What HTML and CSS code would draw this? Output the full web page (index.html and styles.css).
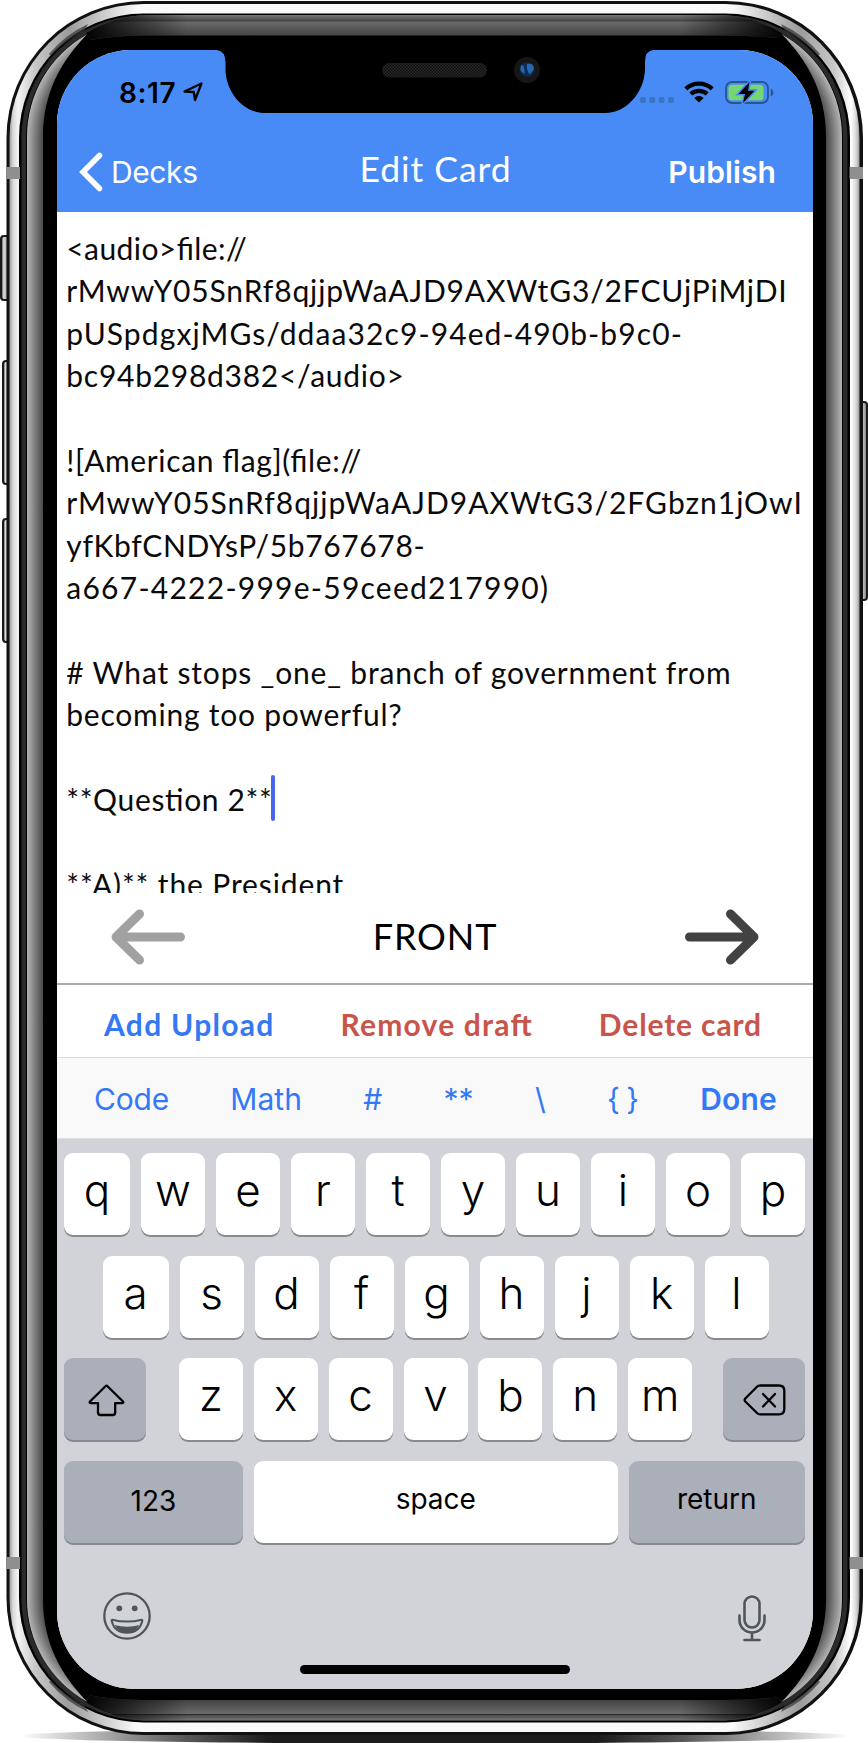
FILE: index.html
```html
<!DOCTYPE html>
<html lang="en">
<head>
<meta charset="utf-8">
<title>Edit Card</title>
<link rel="stylesheet" href="styles.css">
</head>
<body>
<div class="phone">
  <svg class="frame" width="868" height="1743" viewBox="0 0 868 1743" aria-hidden="true">
    <defs>
      <linearGradient id="silver" x1="0" x2="1" y1="0" y2="0">
        <stop offset="0" stop-color="#9a9a9a"/><stop offset=".004" stop-color="#d8d8d8"/><stop offset=".01" stop-color="#f4f4f4"/>
        <stop offset=".03" stop-color="#c8c8c8"/><stop offset=".07" stop-color="#9c9c9c"/><stop offset=".15" stop-color="#fafafa"/>
        <stop offset=".85" stop-color="#fafafa"/><stop offset=".93" stop-color="#9c9c9c"/><stop offset=".97" stop-color="#c8c8c8"/>
        <stop offset=".99" stop-color="#fff"/><stop offset=".996" stop-color="#d8d8d8"/><stop offset="1" stop-color="#9a9a9a"/>
      </linearGradient>
      <linearGradient id="lside" x1="27" x2="43" y1="0" y2="0" gradientUnits="userSpaceOnUse">
        <stop offset="0" stop-color="#b4b4b4"/><stop offset="1" stop-color="#484848"/>
      </linearGradient>
      <radialGradient id="lcorner" cx="144" cy="137" r="117" gradientUnits="userSpaceOnUse">
        <stop offset=".86" stop-color="#484848"/><stop offset="1" stop-color="#b4b4b4"/>
      </radialGradient>
      <linearGradient id="topband" x1="0" x2="0" y1="15" y2="36" gradientUnits="userSpaceOnUse">
        <stop offset="0" stop-color="#777"/><stop offset=".26" stop-color="#4a4a4a"/><stop offset=".28" stop-color="#222"/>
        <stop offset=".32" stop-color="#6b6b6b"/><stop offset="1" stop-color="#424242"/>
      </linearGradient>
      <linearGradient id="fade" x1="82" x2="786" y1="0" y2="0" gradientUnits="userSpaceOnUse">
        <stop offset="0" stop-color="#000"/><stop offset=".15" stop-color="#000" stop-opacity="0"/>
        <stop offset=".85" stop-color="#000" stop-opacity="0"/><stop offset="1" stop-color="#000"/>
      </linearGradient>
      <linearGradient id="shadow" x1="0" x2="1" y1="0" y2="0">
        <stop offset="0" stop-color="#222" stop-opacity="0"/><stop offset=".2" stop-color="#222" stop-opacity=".75"/><stop offset=".3" stop-color="#1c1c1c"/>
        <stop offset=".7" stop-color="#1c1c1c"/><stop offset=".8" stop-color="#222" stop-opacity=".75"/><stop offset="1" stop-color="#222" stop-opacity="0"/>
      </linearGradient>
      <linearGradient id="btn" x1="0" x2="1" y1="0" y2="0">
        <stop offset="0" stop-color="#222"/><stop offset=".3" stop-color="#ddd"/><stop offset="1" stop-color="#777"/>
      </linearGradient>
      <pattern id="mesh" width="3" height="3" patternUnits="userSpaceOnUse">
        <rect width="3" height="3" fill="#0c0c0c"/><rect width="1.5" height="1.5" fill="#2c2c2c"/><rect x="1.5" y="1.5" width="1.5" height="1.5" fill="#2c2c2c"/>
      </pattern>
      <g id="corner">
        <path d="M27 137A117 117 0 0 1 87 34.500C62 60 43 92 43 137Z" fill="url(#lcorner)"/>
        <path d="M49 54Q66 34 88 24L84 32Q66 39 51 56Z" fill="#333" opacity=".7"/>
      </g>
      <g id="edge">
        <path d="M86 33Q110 18 143 15H725Q758 18 782 33L778 38Q756 36 725 35.500H143Q112 36 90 40Z" fill="url(#topband)"/>
        <path d="M86 33Q110 18 143 15H725Q758 18 782 33L778 38Q756 36 725 35.500H143Q112 36 90 40Z" fill="url(#fade)"/>
      </g>
    </defs>
    <ellipse cx="434" cy="1736" rx="416" ry="7.500" fill="url(#shadow)"/>
    <g stroke="#1a1a1a" stroke-width="2" fill="url(#btn)">
      <rect x="1" y="236" width="9" height="64" rx="3"/>
      <rect x="3" y="361" width="8" height="123" rx="3"/>
      <rect x="3" y="519" width="8" height="123" rx="3"/>
      <rect x="859" y="402" width="8" height="198" rx="3"/>
    </g>
    <rect x="6.500" y="1" width="856.500" height="1734" rx="137" fill="#111"/>
    <rect x="9.500" y="4" width="850" height="1728" rx="134" fill="url(#silver)"/>
    <rect x="19" y="13.500" width="831" height="1709" rx="124.500" fill="#000"/>
    <rect x="21.500" y="15.500" width="826" height="1705" rx="122" fill="#2b2b2b"/>
    <rect x="26" y="20" width="817" height="1695" rx="117" fill="#000"/>
    <rect x="27" y="136.500" width="16" height="1463" fill="url(#lside)"/>
    <rect x="27" y="136.500" width="16" height="1463" fill="url(#lside)" transform="matrix(-1 0 0 1 869 0)"/>
    <use href="#corner"/>
    <use href="#corner" transform="matrix(-1 0 0 1 869 0)"/>
    <use href="#corner" transform="matrix(1 0 0 -1 0 1736)"/>
    <use href="#corner" transform="matrix(-1 0 0 -1 869 1736)"/>
    <use href="#edge"/>
    <use href="#edge" transform="matrix(1 0 0 -1 0 1735.500)"/>
    <g fill="#8f8f8f">
      <rect x="7" y="167" width="13" height="12"/><rect x="849.500" y="167" width="13.500" height="12"/>
      <rect x="7" y="1557" width="13" height="12"/><rect x="849.500" y="1557" width="13.500" height="12"/>
    </g>
  </svg>

  <main class="screen">
    <header class="top">
      <div class="status">
        <span class="clock">8:17</span>
        <svg class="loc" width="21" height="20" viewBox="0 0 21 20"><path d="M1.500 9.500L18.500 1.500L12 18L10.800 10Z" fill="none" stroke="#000" stroke-width="2.300" stroke-linejoin="round"/></svg>
        <svg class="signal" width="34" height="6" viewBox="0 0 34 6" fill="#3d73c4"><rect width="6" height="6" rx="2"/><rect x="9.300" width="6" height="6" rx="2"/><rect x="18.600" width="6" height="6" rx="2"/><rect x="28" width="6" height="6" rx="2"/></svg>
        <svg class="wifi" width="30" height="22" viewBox="0 0 30 22"><path d="M1.800 7.800A19.500 19.500 0 0 1 28.200 7.800M6.800 13A12.300 12.300 0 0 1 23.200 13" fill="none" stroke="#000" stroke-width="4.300"/><path d="M15 21.500L10.300 17A6.500 6.500 0 0 1 19.700 17Z"/></svg>
        <svg class="battery" width="49" height="23" viewBox="0 0 49 23"><rect x="1" y="1" width="42" height="21" rx="6" fill="none" stroke="#2c5490" stroke-width="1.800"/><path d="M45.800 7.500Q48.500 9 48.500 11.500T45.800 15.500Z" fill="#2c5490"/><rect x="3.500" y="3.700" width="35" height="15.500" rx="3.500" fill="#76d672"/><path d="M24.500 1L13.500 13H20L18 22L29.500 9.800H23Z" stroke="#488bf6" stroke-width="3"/><path d="M24.500 1L13.500 13H20L18 22L29.500 9.800H23Z" fill="#000"/></svg>
      </div>
      <nav class="nav">
        <span class="back"><svg width="24" height="40" viewBox="0 0 24 40"><path d="M20.500 3.500L4 20L20.500 36.500" fill="none" stroke="#fff" stroke-width="5.500" stroke-linecap="round"/></svg><span class="decks">Decks</span></span>
        <h1 class="title">Edit Card</h1>
        <span class="publish">Publish</span>
      </nav>
    </header>

    <section class="editor">
      <div class="line s1">&lt;audio&gt;file://</div>
      <div class="line s2">rMwwY05SnRf8qjjpWaAJD9AXWtG3/2FCUjPiMjDI</div>
      <div class="line s3">pUSpdgxjMGs/ddaa32c9-94ed-490b-b9c0-</div>
      <div class="line s4">bc94b298d382&lt;/audio&gt;</div>
      <div class="line"></div>
      <div class="line s5">![American flag](file://</div>
      <div class="line s6">rMwwY05SnRf8qjjpWaAJD9AXWtG3/2FGbzn1jOwI</div>
      <div class="line s7">yfKbfCNDYsP/5b767678-</div>
      <div class="line s8">a667-4222-999e-59ceed217990)</div>
      <div class="line"></div>
      <div class="line s9"># What stops _one_ branch of government from</div>
      <div class="line s10">becoming too powerful?</div>
      <div class="line"></div>
      <div class="line s11">**Question 2**<span class="caret"></span></div>
      <div class="line"></div>
      <div class="line s12">**A)** the President</div>
    </section>

    <section class="pager">
      <svg width="75" height="56" viewBox="0 0 75 56"><path d="M28.500 5L5 28L28.500 51M8 28H69.500" fill="none" stroke="#a1a1a1" stroke-width="9" stroke-linecap="round" stroke-linejoin="round"/></svg>
      <span class="side">FRONT</span>
      <svg width="75" height="56" viewBox="0 0 75 56"><path d="M46.500 5L70 28L46.500 51M67 28H5.500" fill="none" stroke="#424242" stroke-width="9" stroke-linecap="round" stroke-linejoin="round"/></svg>
    </section>

    <section class="actions">
      <span class="add">Add Upload</span>
      <span class="danger">Remove draft</span>
      <span class="danger delete">Delete card</span>
    </section>

    <section class="tools">
      <span class="code">Code</span><span class="math">Math</span><span>#</span><span class="stars">**</span><span>\</span><span class="braces">{ }</span><span class="done">Done</span>
    </section>

    <section class="keyboard">
      <div class="row">
        <span class="key first">q</span><span class="key">w</span><span class="key">e</span><span class="key">r</span><span class="key">t</span><span class="key">y</span><span class="key">u</span><span class="key">i</span><span class="key">o</span><span class="key">p</span>
      </div>
      <div class="row indent">
        <span class="key first">a</span><span class="key">s</span><span class="key">d</span><span class="key">f</span><span class="key">g</span><span class="key">h</span><span class="key">j</span><span class="key">k</span><span class="key">l</span>
      </div>
      <div class="row">
        <span class="key dark shift"><svg width="37" height="33" viewBox="0 0 37 33"><path d="M17.500 2.300Q18.500 1.200 19.500 2.300L35 17.500Q36 19 34.300 19.200H27.200V28.500Q27.200 31 24.700 31H12.500Q10 31 10 28.500V19.200H2.700Q1 19 2 17.500Z" fill="none" stroke="#000" stroke-width="2.300" stroke-linejoin="round"/></svg></span>
        <span class="key">z</span><span class="key">x</span><span class="key">c</span><span class="key">v</span><span class="key">b</span><span class="key">n</span><span class="key">m</span>
        <span class="key dark erase"><svg width="43" height="32" viewBox="0 0 43 32"><path d="M17 1.500H36Q41.300 1.500 41.300 6.500V25Q41.300 30.300 36 30.300H17Q15.300 30.300 14 29L2.300 17.500Q1 16 2.300 14.500L14 2.800Q15.300 1.500 17 1.500ZM20 10L32 22.500M32 10L20 22.500" fill="none" stroke="#000" stroke-width="2.300" stroke-linecap="round" stroke-linejoin="round"/></svg></span>
      </div>
      <div class="row">
        <span class="key dark word numbers">123</span><span class="key word space">space</span><span class="key dark word return">return</span>
      </div>
      <div class="footer">
        <svg width="48" height="48" viewBox="0 0 48 48" fill="none" stroke="#50555c" stroke-width="2.300"><circle cx="24" cy="24" r="22.700"/><g fill="#50555c" stroke="none"><circle cx="16.300" cy="16.300" r="2.900"/><circle cx="31.700" cy="16.300" r="2.900"/><path d="M11.500 33Q24 36.500 36.500 33Q32 41 24 41T11.500 33Z"/></g><path d="M9.200 27.700Q24 31.500 38.800 27.700Q39.600 27.700 39.300 29Q36.500 40.700 24 40.700T8.700 29Q8.400 27.700 9.200 27.700Z" stroke-width="2"/></svg>
        <svg class="mic" width="28" height="47" viewBox="0 0 28 47" fill="none" stroke="#50555c" stroke-width="2.600" stroke-linecap="round"><rect x="6.500" y="1.500" width="15" height="31" rx="7.500"/><path d="M1.500 20.500V25A12.500 12.500 0 0 0 26.500 25V20.500M14 38V45M6.500 45H21.500"/></svg>
      </div>
      <div class="home"></div>
    </section>

    <svg class="notch" width="436" height="64" viewBox="0 0 436 64" aria-hidden="true"><path d="M0 0Q8 1 8.500 12V20C9 42 26 63 48 63H388C410 63 427 42 428 20V12Q428 1 436 0Z"/><rect x="165" y="13" width="105" height="14.500" rx="7.250" fill="url(#mesh)"/><circle cx="310" cy="20" r="13" fill="#161616"/><circle cx="310" cy="19.500" r="7.300" fill="#0c2c50"/><path d="M304.500 15Q308 15 307.500 24Q301 20 304.500 15ZM310 14Q317 13 317 19L313 24.500Q309 21 310 14Z" fill="#2a66ab"/></svg>
  </main>
</div>
</body>
</html>
```
FILE: styles.css
```css
* { box-sizing: border-box; }
body { margin: 0; background: #fff; color: #0a0a0a; }
.phone { position: relative; width: 868px; height: 1743px; padding: 50px 55px 54px 57px; overflow: hidden; }
.frame { position: absolute; left: 0; top: 0; }
.screen {
  position: relative; display: flex; flex-direction: column; width: 756px; height: 1639px;
  overflow: hidden; border-radius: 74px 74px 78px 78px; background: #fff;
  font-family: Lato, sans-serif; font-size: 30px; font-feature-settings: "liga" 1;
}
.notch { position: absolute; left: 160px; top: 0; }

/* status bar and navigation */
.top { height: 161.5px; background: #488bf6; }
.status { display: flex; align-items: flex-start; height: 83px; padding: 31px 0 0 62px; }
.clock { width: 57px; margin-right: 7px; font: 600 28px/24px Inter, sans-serif; letter-spacing: .6px; color: #000; }
.loc { margin-top: 1px; margin-right: 436px; }
.signal { margin-top: 15.5px; margin-right: 10px; }
.wifi { margin-right: 11px; }
.nav { display: grid; grid-template-columns: 1fr auto 1fr; align-items: center; height: 77px; padding: 0 37px 0 22px; color: #fff; }
.back { display: flex; align-items: center; gap: 8px; }
.decks { font: 30px/38px Inter, sans-serif; letter-spacing: -.4px; }
.title { margin: 0; padding: 0 0 5px 16px; font-weight: 400; font-size: 35.5px; line-height: 38px; letter-spacing: .95px; }
.publish { justify-self: end; font: 600 30px/38px Inter, sans-serif; letter-spacing: .1px; }

/* markdown source */
.editor { height: 681.5px; padding: 15.5px 0 0 9.3px; overflow: hidden; }
.line { height: 42.4px; line-height: 42.4px; white-space: pre; }
.s1 { letter-spacing: .42px; }
.s2 { letter-spacing: .85px; }
.s3 { letter-spacing: 1.1px; }
.s4 { letter-spacing: .73px; }
.s5 { letter-spacing: .62px; }
.s6 { letter-spacing: 1px; }
.s7 { letter-spacing: .64px; }
.s8 { letter-spacing: 1.25px; }
.s9 { letter-spacing: .82px; }
.s10 { letter-spacing: .76px; }
.s11 { letter-spacing: .65px; }
.s12 { letter-spacing: .88px; }
.caret { display: inline-block; width: 3.7px; height: 46px; margin: -8px 0 -4px -1px; border-radius: 2px; background: #4a66ee; vertical-align: middle; position: relative; top: -3px; }

.pager { display: flex; align-items: center; justify-content: space-between; height: 92px; padding: 0 54px 2px 54px; border-bottom: 2px solid #ababab; }
.side { padding-bottom: 3px; font-size: 36px; line-height: 44px; letter-spacing: .9px; color: #000; }
.actions { display: flex; align-items: center; justify-content: space-between; height: 73px; padding: 6px 51px 0 47px; border-bottom: 1.5px solid #d9dadb; font-weight: 700; }
.add { letter-spacing: 1.3px; color: #3478f6; }
.danger { letter-spacing: 1.2px; color: #c9544a; }
.delete { letter-spacing: .85px; }
.tools { display: flex; align-items: center; justify-content: space-between; height: 81px; padding: 1px 36px 0 37px; background: #f9f9f9; border-bottom: 1px solid #dfe0e2; font: 30px/38px Inter, sans-serif; color: #3478f6; }
.code { letter-spacing: -.2px; }
.math { letter-spacing: .1px; }
.done { font-weight: 600; letter-spacing: .2px; }
.braces { word-spacing: -2px; }

/* keyboard */
.keyboard { display: flex; flex-direction: column; gap: 20.5px; flex: 1; padding: 14px 8px 0 7px; background: #d1d3d9; font-family: Inter, sans-serif; color: #000; }
.row { display: flex; justify-content: space-between; height: 82px; }
.indent { padding: 0 36.5px 0 38.5px; }
.key { display: flex; align-items: center; justify-content: center; width: 64px; height: 82px; padding-bottom: 8px; border-radius: 9px; background: #fff; box-shadow: 0 2px 0 #898a8d; font-size: 44px; font-weight: 300; line-height: 50px; }
.first { width: 66px; }
.dark { background: #abafba; }
.word { padding-bottom: 5px; font-size: 28px; font-weight: 400; line-height: 34px; }
.shift, .erase { width: 82px; padding-bottom: 0; }
.shift { margin-right: 22px; padding-top: 3px; padding-left: 3px; }
.erase { margin-left: 20px; padding-top: 2px; }
.numbers { width: 179px; padding-bottom: 1px; }
.space { width: 364px; }
.return { width: 176.5px; }
.footer { display: flex; align-items: center; justify-content: space-between; margin-top: 28px; padding: 0 39px; height: 49px; }
.mic { margin-top: 5px; }
.home { align-self: center; width: 270px; height: 9px; margin-top: 4px; border-radius: 5px; background: #000; }
```
